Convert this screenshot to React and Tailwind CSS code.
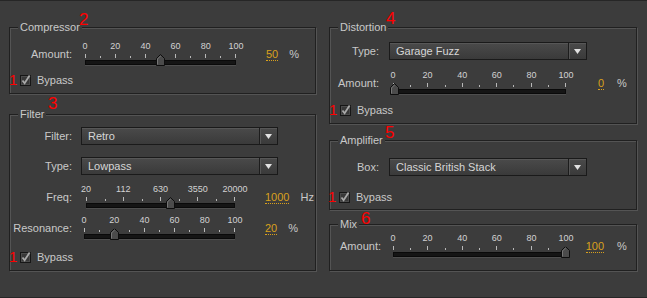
import React from "react";

const AMOUNT_LABELS = ["0", "20", "40", "60", "80", "100"];
const FREQ_LABELS = ["20", "112", "630", "3550", "20000"];

// slider thumb: small up-pointing pentagon
const Thumb = ({ pct }) => (
  <svg
    width="9"
    height="12"
    viewBox="0 0 9 12"
    className="absolute top-[-7px]"
    style={{ left: `calc(${pct}% - 4.5px)` }}
  >
    <path d="M0.5 11.5V4.5L4.5 0.5L8.5 4.5V11.5Z" fill="#4b4b4b" stroke="#0d0d0d" />
    <path d="M1.5 10.5V5L4.5 2" stroke="#767676" fill="none" />
  </svg>
);

const Slider = ({ labels, pct, className }) => {
  const ticks = [];
  for (let i = 0; i < labels.length * 2 - 1; i++) ticks.push(i % 2 === 0);
  return (
    <div className={className}>
      <div className="flex justify-between h-[10px] text-[9px] leading-[10px] text-[#d2d2d2]">
        {labels.map((l) => (
          <span key={l} className="w-0 flex justify-center whitespace-nowrap">
            {l}
          </span>
        ))}
      </div>
      <div className="mt-[3px] flex justify-between items-end h-[4px]">
        {ticks.map((major, i) => (
          <span
            key={i}
            className={major ? "w-px h-[4px] bg-[#b8b8b8]" : "w-px h-[2px] bg-[#b8b8b8]"}
          />
        ))}
      </div>
      <div className="relative mt-[2px] h-[5px] bg-[#151515] border border-[#0a0a0a] shadow-[0_1px_0_#4e4e4e]">
        <Thumb pct={pct} />
      </div>
    </div>
  );
};

const Select = ({ value, className }) => (
  <div
    className={`flex h-[18px] border border-[#1a1a1a] bg-linear-to-b from-[#4a4a4a] to-[#3a3a3a] shadow-[inset_0_1px_0_#575757] ${className}`}
  >
    <span className="flex-1 pl-[6px] leading-[16px] text-[#d6d6d6]">{value}</span>
    <span className="w-px bg-[#1c1c1c] shadow-[1px_0_0_#555]" />
    <span className="w-[17px] flex items-center justify-center">
      <svg width="7" height="5" viewBox="0 0 7 5">
        <path d="M0 0H7L3.5 5Z" fill="#e2e2e2" />
      </svg>
    </span>
  </div>
);

const Bypass = () => (
  <div className="flex items-center">
    <span className="relative w-[11px] h-[11px]">
      <span className="absolute left-[-11px] top-[-3px] text-[15px] leading-[15px] text-[#ff0000]">1</span>
      <svg width="11" height="11" viewBox="0 0 11 11" className="overflow-visible">
        <rect x="0.5" y="0.5" width="10" height="10" fill="#383838" stroke="#161616" />
        <rect x="1.5" y="1.5" width="8" height="8" fill="none" stroke="#4c4c4c" />
        <path d="M2.5 5.5L4.6 8.2L9.6 0.6" stroke="#a9a9a9" strokeWidth="1.8" fill="none" />
      </svg>
    </span>
    <span className="ml-[6px] leading-[13px]">Bypass</span>
  </div>
);

const Group = ({ title, className, children }) => (
  <fieldset
    className={`border border-[#202020] shadow-[inset_1px_1px_0_#545454,1px_1px_0_#545454] ${className}`}
  >
    <legend className="ml-[8px] px-[2px] bg-[#3c3c3c] leading-[14px]">{title}</legend>
    {children}
  </fieldset>
);

const Value = ({ children }) => (
  <span className="leading-[12px] text-[#d9a01c] border-b border-dotted border-[#d9a01c]">
    {children}
  </span>
);

// left column value + unit (value left aligned after the slider)
const LeftReadout = ({ value, unit }) => (
  <>
    <span className="ml-[30px] mt-[7px] flex">
      <Value>{value}</Value>
    </span>
    <span className="ml-[11px] mt-[6px] leading-[14px]">{unit}</span>
  </>
);

// right column value + unit (value right aligned)
const RightReadout = ({ value, unit }) => (
  <>
    <span className="w-[38px] mt-[7px] flex justify-end">
      <Value>{value}</Value>
    </span>
    <span className="ml-[13px] mt-[6px] leading-[14px]">{unit}</span>
  </>
);

const freqPct = (Math.log(1000 / 20) / Math.log(20000 / 20)) * 100;

export default function App() {
  return (
    <div className="relative w-[647px] h-[298px] bg-[#3c3c3c] border-y border-[#262626] flex gap-[13px] pl-[9px] font-['Liberation_Sans',Arial,sans-serif] text-[11px] text-[#c9c9c9]">
      {/* left column */}
      <div className="w-[307px] pt-[19px] flex flex-col">
        <Group title="Compressor" className="pb-[6px]">
          <div className="flex items-start mt-[7px]">
            <span className="w-[62px] text-right mt-[6px] leading-[14px]">Amount:</span>
            <Slider labels={AMOUNT_LABELS} pct={50} className="ml-[13px] w-[151px]" />
            <LeftReadout value="50" unit="%" />
          </div>
          <div className="mt-[9px] ml-[10px]">
            <Bypass />
          </div>
        </Group>

        <Group title="Filter" className="mt-[13px] pb-[6px]">
          <div className="flex items-center mt-[6px]">
            <span className="w-[62px] text-right">Filter:</span>
            <Select value="Retro" className="ml-[9px] w-[197px]" />
          </div>
          <div className="flex items-center mt-[12px]">
            <span className="w-[62px] text-right">Type:</span>
            <Select value="Lowpass" className="ml-[9px] w-[197px]" />
          </div>
          <div className="flex items-start mt-[9px]">
            <span className="w-[62px] text-right mt-[6px] leading-[14px]">Freq:</span>
            <Slider labels={FREQ_LABELS} pct={freqPct} className="ml-[14px] w-[149px]" />
            <LeftReadout value="1000" unit="Hz" />
          </div>
          <div className="flex items-start mt-[7px]">
            <span className="w-[62px] text-right mt-[6px] leading-[14px]">Resonance:</span>
            <Slider labels={AMOUNT_LABELS} pct={20} className="ml-[12px] w-[151px]" />
            <LeftReadout value="20" unit="%" />
          </div>
          <div className="mt-[12px] ml-[10px]">
            <Bypass />
          </div>
        </Group>
      </div>

      {/* right column */}
      <div className="w-[308px] pt-[19px] flex flex-col">
        <Group title="Distortion" className="pb-[6px]">
          <div className="flex items-center mt-[8px]">
            <span className="w-[49px] text-right">Type:</span>
            <Select value="Garage Fuzz" className="ml-[10px] w-[198px]" />
          </div>
          <div className="flex items-start mt-[10px]">
            <span className="w-[49px] text-right mt-[6px] leading-[14px]">Amount:</span>
            <Slider labels={AMOUNT_LABELS} pct={0} className="ml-[14px] w-[173px]" />
            <RightReadout value="0" unit="%" />
          </div>
          <div className="mt-[10px] ml-[10px]">
            <Bypass />
          </div>
        </Group>

        <Group title="Amplifier" className="mt-[9px] pb-[5px]">
          <div className="flex items-center mt-[11px]">
            <span className="w-[49px] text-right">Box:</span>
            <Select value="Classic British Stack" className="ml-[10px] w-[198px]" />
          </div>
          <div className="mt-[15px] ml-[9px]">
            <Bypass />
          </div>
        </Group>

        <Group title="Mix" className="mt-[7px] pb-[13px]">
          <div className="flex items-start mt-[2px]">
            <span className="w-[51px] text-right mt-[6px] leading-[14px]">Amount:</span>
            <Slider labels={AMOUNT_LABELS} pct={100} className="ml-[12px] w-[173px]" />
            <RightReadout value="100" unit="%" />
          </div>
        </Group>
      </div>

      {/* red annotation numbers */}
      <span className="absolute left-[79px] top-[10px] text-[17px] leading-[17px] text-[#ff0000]">2</span>
      <span className="absolute left-[48px] top-[94px] text-[17px] leading-[17px] text-[#ff0000]">3</span>
      <span className="absolute left-[386px] top-[9px] text-[17px] leading-[17px] text-[#ff0000]">4</span>
      <span className="absolute left-[385px] top-[123px] text-[17px] leading-[17px] text-[#ff0000]">5</span>
      <span className="absolute left-[361px] top-[209px] text-[17px] leading-[17px] text-[#ff0000]">6</span>
    </div>
  );
}
